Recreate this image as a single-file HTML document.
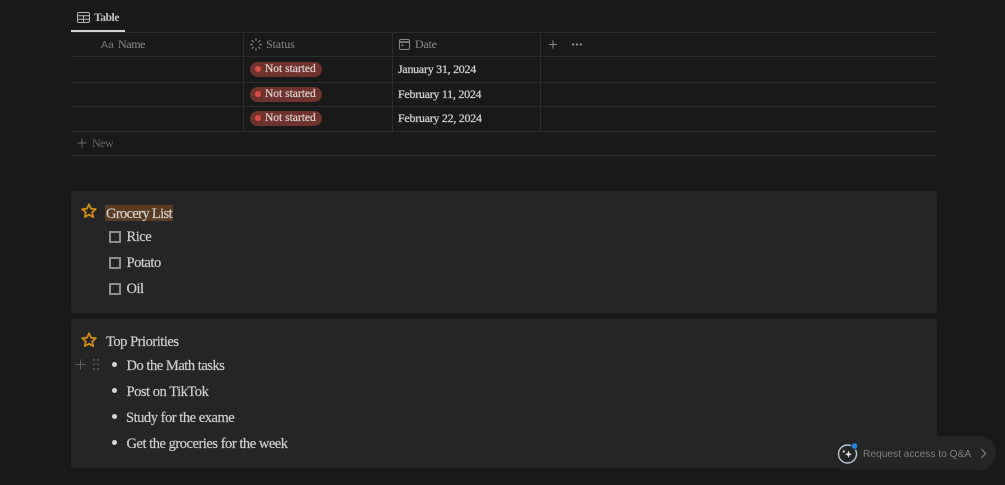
<!DOCTYPE html>
<html><head><meta charset="utf-8">
<style>
html,body{margin:0;padding:0;width:1005px;height:485px;overflow:hidden;background:#191919;}
body{position:relative;font-family:"Liberation Serif",serif;color:#d4d4d4;}
#w{position:absolute;left:0;top:0;width:1005px;height:485px;filter:blur(.3px);}
.a{position:absolute;white-space:nowrap;}
.h{background:#2b2b2b;height:1px;left:71px;width:866px;position:absolute;}
.v{background:#2b2b2b;width:1px;position:absolute;top:32px;height:100px;}
.hd{font-size:12px;line-height:14px;color:#8a8a8a;letter-spacing:-.12px;}
.pill{position:absolute;left:250px;width:72px;height:15px;border-radius:8px;background:#6f322d;}
.pill i{position:absolute;left:5px;top:4px;width:6px;height:6px;border-radius:50%;background:#d44c47;}
.pill span{position:absolute;left:15px;top:0;font-size:11.5px;line-height:14px;color:#dcd4d1;white-space:nowrap;-webkit-text-stroke:.2px #dcd4d1;}
.d{font-size:12px;line-height:14px;color:#cdcdcd;left:398px;letter-spacing:-.27px;-webkit-text-stroke:.3px #cdcdcd;}
.card{position:absolute;left:71px;width:866px;background:#252525;border-radius:3px;}
.t{font-size:14.5px;line-height:18px;color:#cfcfcf;letter-spacing:-.47px;-webkit-text-stroke:.2px #cfcfcf;}
.cb{position:absolute;left:108.5px;width:8px;height:8px;border:2px solid #8f8f8f;}
.b{position:absolute;left:112px;width:5px;height:5px;border-radius:50%;background:#d8d8d8;}
</style></head><body><div id="w">

<svg class="a" style="left:77px;top:12px" width="13" height="11" viewBox="0 0 13 11" fill="none" stroke="#b5b5b5" stroke-width="1"><rect x=".5" y=".5" width="12" height="10" rx="1.5"/><path d="M.5 3.800h12M.5 7.200h12M6.500 3.800v6.700"/></svg>
<div class="a" style="left:94px;top:10.500px;font-size:11.500px;line-height:14px;font-weight:bold;color:#c4c4c4;letter-spacing:-.4px">Table</div>
<div class="a" style="left:71px;top:30px;width:54px;height:2px;background:#d4d4d4"></div>

<div class="h" style="top:32px"></div>
<div class="h" style="top:56px"></div>
<div class="h" style="top:82px"></div>
<div class="h" style="top:106px"></div>
<div class="h" style="top:131px"></div>
<div class="h" style="top:155px"></div>
<div class="v" style="left:243px"></div>
<div class="v" style="left:392px"></div>
<div class="v" style="left:540px"></div>

<div class="a" style="left:101px;top:38px;font:10.500px/14px 'Liberation Sans',sans-serif;color:#777">Aa</div>
<div class="a hd" style="left:118px;top:37px;letter-spacing:-.4px">Name</div>
<svg class="a" style="left:250px;top:38px" width="12" height="13" viewBox="0 0 12 13" fill="none" stroke="#8a8a8a" stroke-width="1.200" stroke-linecap="round"><path d="M6 .8v1.600M6 10.600v1.600M.6 6.500h1.600M9.800 6.500h1.600M2.200 2.700l1 1M8.800 9.300l1 1M2.200 10.300l1-1M8.800 3.700l1-1"/></svg>
<div class="a hd" style="left:266px;top:37px">Status</div>
<svg class="a" style="left:399px;top:39px" width="11" height="11" viewBox="0 0 11 11" fill="none" stroke="#8a8a8a"><rect x=".5" y=".5" width="10" height="10" rx="1.500"/><path d="M.5 3h10" stroke-width="1.600"/><path d="M2.500 5.500h2v1.500h-2z" fill="#8a8a8a" stroke="none"/></svg>
<div class="a hd" style="left:415px;top:37px;letter-spacing:-.25px">Date</div>
<svg class="a" style="left:549px;top:40px" width="8" height="9" viewBox="0 0 8 9" stroke="#8a8a8a" stroke-width="1"><path d="M4 .5v8M0 4.500h8"/></svg>
<svg class="a" style="left:572px;top:43px" width="10" height="3" viewBox="0 0 10 3" fill="#9a9a9a"><circle cx="1.200" cy="1.500" r="1.100"/><circle cx="5" cy="1.500" r="1.100"/><circle cx="8.800" cy="1.500" r="1.100"/></svg>

<div class="pill" style="top:62px"><i></i><span>Not started</span></div>
<div class="pill" style="top:87px"><i></i><span>Not started</span></div>
<div class="pill" style="top:111px"><i></i><span>Not started</span></div>
<div class="a d" style="top:61.500px">January 31, 2024</div>
<div class="a d" style="top:86.500px">February 11, 2024</div>
<div class="a d" style="top:110.500px">February 22, 2024</div>

<svg class="a" style="left:77px;top:138px" width="10" height="10" viewBox="0 0 10 10" stroke="#6a6a6a" stroke-width="1"><path d="M5 .5v9M.5 5h9"/></svg>
<div class="a hd" style="left:92px;top:136px;color:#666;letter-spacing:-.5px">New</div>

<div class="card" style="top:191px;height:122px"></div>
<div class="card" style="top:319px;height:149px"></div>

<svg class="a" style="left:81px;top:203px" width="16" height="16" viewBox="0 0 16 16" fill="none" stroke="#cf8b17" stroke-width="1.800" stroke-linejoin="round"><path d="M8 1.300l2 4.400 4.800.5-3.600 3.200 1 4.700L8 11.700l-4.200 2.400 1-4.700L1.200 6.200l4.800-.5z"/></svg>
<div class="a" style="left:105px;top:205px;width:68px;height:16px;background:#5c3b23"></div>
<div class="a t" style="left:106px;top:204.500px;letter-spacing:-.65px">Grocery List</div>

<div class="cb" style="top:231px"></div>
<div class="a t" style="left:126.500px;top:228px">Rice</div>
<div class="cb" style="top:257px"></div>
<div class="a t" style="left:126.500px;top:254px">Potato</div>
<div class="cb" style="top:283px"></div>
<div class="a t" style="left:126.500px;top:280px">Oil</div>

<svg class="a" style="left:81px;top:332px" width="16" height="16" viewBox="0 0 16 16" fill="none" stroke="#cf8b17" stroke-width="1.800" stroke-linejoin="round"><path d="M8 1.300l2 4.400 4.800.5-3.600 3.200 1 4.700L8 11.700l-4.200 2.400 1-4.700L1.200 6.200l4.800-.5z"/></svg>
<div class="a t" style="left:106px;top:332.500px">Top Priorities</div>

<svg class="a" style="left:75px;top:359px" width="11" height="11" viewBox="0 0 11 11" stroke="#5f5f5f" stroke-width="1"><path d="M5.500 .5v10M.5 5.500h10"/></svg>
<svg class="a" style="left:93px;top:359px" width="6" height="11" viewBox="0 0 6 11" fill="#5a5a5a"><circle cx="1" cy="1" r="1"/><circle cx="5" cy="1" r="1"/><circle cx="1" cy="5.500" r="1"/><circle cx="5" cy="5.500" r="1"/><circle cx="1" cy="10" r="1"/><circle cx="5" cy="10" r="1"/></svg>

<div class="b" style="top:362px"></div>
<div class="a t" style="left:126.500px;top:357px">Do the Math tasks</div>
<div class="b" style="top:388px"></div>
<div class="a t" style="left:126.500px;top:383px">Post on TikTok</div>
<div class="b" style="top:414px"></div>
<div class="a t" style="left:126px;top:409px">Study for the exame</div>
<div class="b" style="top:440px"></div>
<div class="a t" style="left:126.500px;top:435px">Get the groceries for the week</div>

<div class="a" style="left:830px;top:436px;width:166px;height:34px;border-radius:17px;background:#252525"></div>
<svg class="a" style="left:836px;top:441px" width="24" height="24" viewBox="0 0 24 24" fill="none"><circle cx="11.500" cy="13" r="9" stroke="#b9c6d3" stroke-width="1.400"/><path d="M12.500 9.500l1 2.700 2.700 1-2.700 1-1 2.700-1-2.700-2.700-1 2.700-1z" fill="#e2e2e2"/><circle cx="7.800" cy="10.500" r="1.100" fill="#e2e2e2"/><circle cx="18.500" cy="5" r="3.300" fill="#2383e2" stroke="#252525"/></svg>
<div class="a" style="left:863px;top:447px;font:10.200px/15px 'Liberation Sans',sans-serif;color:#7f7f7f">Request access to Q&amp;A</div>
<svg class="a" style="left:980px;top:448px" width="7" height="11" viewBox="0 0 7 11" fill="none" stroke="#7a7a7a" stroke-width="1.300"><path d="M1.500 1l4 4.500-4 4.500"/></svg>

</div></body></html>
